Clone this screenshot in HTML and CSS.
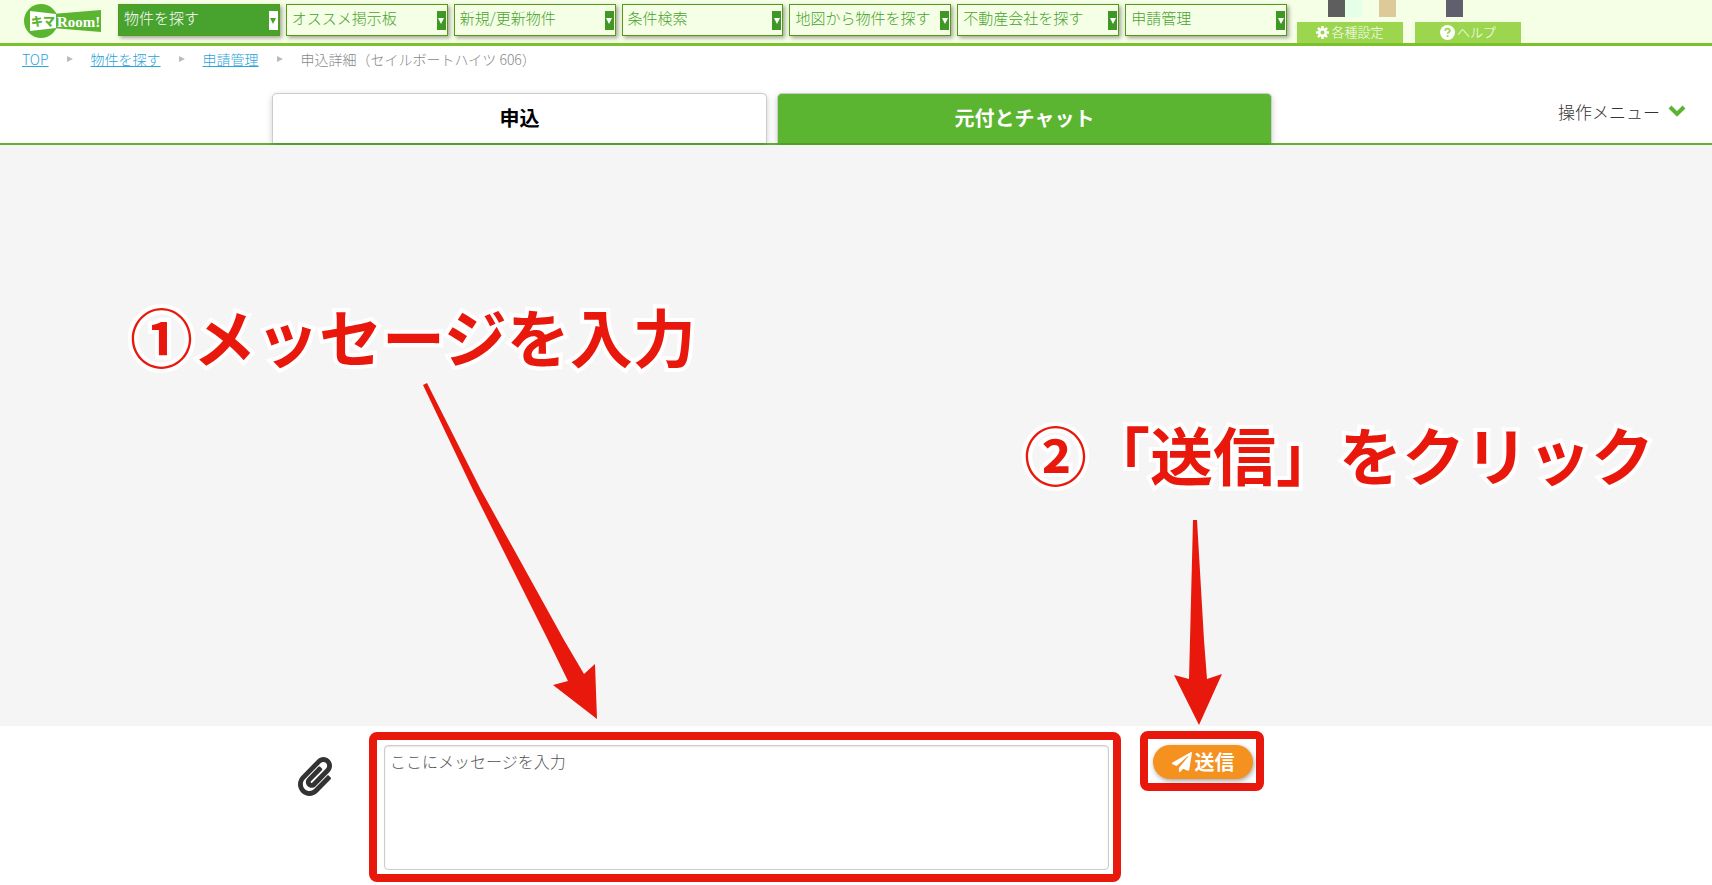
FILE: index.html
```html
<!DOCTYPE html>
<html lang="ja">
<head>
    <meta charset="UTF-8">
    <meta name="viewport" content="width=device-width, initial-scale=1.0">
    <title>申込詳細 | キマRoom!</title>
    <link rel="stylesheet" href="styles.css">
</head>
<body>
    <header class="header">
        <a href="#" class="logo" aria-label="キマRoom!">
            <svg width="78" height="36" viewBox="24 3 78 36">
                <circle cx="41" cy="21" r="17" fill="#5cb531"/>
                <path d="M52 14 L101 10 V32 L52 28 Z" fill="#5cb531"/>
                <path d="M30 11 L56 14 V28 L30 31 Z" fill="#fff"/>
                <text x="31" y="26" class="logo-kima">キマ</text>
                <text x="57" y="27" class="logo-room">Room!</text>
            </svg>
        </a>
        <nav class="nav">
            <a href="#" class="active">物件を探す<span class="arrow"></span></a>
            <a href="#">オススメ掲示板<span class="arrow"></span></a>
            <a href="#">新規/更新物件<span class="arrow"></span></a>
            <a href="#">条件検索<span class="arrow"></span></a>
            <a href="#">地図から物件を探す<span class="arrow"></span></a>
            <a href="#">不動産会社を探す<span class="arrow"></span></a>
            <a href="#">申請管理<span class="arrow"></span></a>
        </nav>
        <div class="utility">
            <div class="utility-col">
                <div class="mosaic">
                    <span class="m-gray"></span><span class="m-mint"></span><span class="m-sand"></span>
                </div>
                <a href="#" class="utility-btn">
                    <svg width="13" height="13" viewBox="0 0 16 16">
                        <circle cx="8" cy="8" r="4" fill="none" stroke="#fff" stroke-width="3"/>
                        <path d="M8 0v3M8 13v3M0 8h3M13 8h3M2.4 2.4l2 2M11.6 11.6l2 2M2.4 13.6l2-2M11.6 4.4l2-2" stroke="#fff" stroke-width="3"/>
                    </svg>
                    各種設定
                </a>
            </div>
            <div class="utility-col">
                <div class="mosaic">
                    <span class="m-navy"></span>
                </div>
                <a href="#" class="utility-btn">
                    <svg width="15" height="15" viewBox="0 0 16 16">
                        <circle cx="8" cy="8" r="8" fill="#fff"/>
                        <path d="M5.6 6.2c0-3.2 4.9-3 4.9-.2 0 1.6-2.4 1.7-2.4 3.4M8.1 10.8v2" fill="none" stroke="#9bd64e" stroke-width="2"/>
                    </svg>
                    ヘルプ
                </a>
            </div>
        </div>
    </header>

    <nav class="breadcrumb">
        <a href="#">TOP</a>
        <span class="sep"></span>
        <a href="#">物件を探す</a>
        <span class="sep"></span>
        <a href="#">申請管理</a>
        <span class="sep"></span>
        <span>申込詳細（セイルボートハイツ 606）</span>
    </nav>

    <div class="tab-bar">
        <div class="tabs">
            <button type="button" class="tab">申込</button>
            <button type="button" class="tab selected">元付とチャット</button>
        </div>
        <div class="tab-side">
            <button type="button" class="menu-btn">
                操作メニュー
                <svg width="18" height="12" viewBox="0 0 18 12">
                    <path d="M2 2 L9 9 L16 2" fill="none" stroke="#5cb531" stroke-width="4"/>
                </svg>
            </button>
        </div>
    </div>

    <main class="chat">
        <p class="note note-1">①メッセージを入力</p>
        <p class="note note-2">②「送信」をクリック</p>
        <svg class="pointer pointer-1" width="180" height="340" viewBox="420 380 180 340">
            <path d="M423 385 L427 383 L481 490 L564 640 L584 674 L595 664 L597 719 L553 685 L568 681 L548 640 L473 490 Z"/>
        </svg>
        <svg class="pointer pointer-2" width="50" height="206" viewBox="1173 520 50 206">
            <path d="M1193 520 H1197 L1204 640 L1207 679 L1222 674 L1199 725 L1174 675 L1189 679 L1190 640 Z"/>
        </svg>
    </main>

    <form class="composer">
        <button type="button" class="attach" aria-label="ファイルを添付">
            <svg width="34" height="39" viewBox="0 0 448 512">
                <path fill="#333" d="M43.246 466.142c-58.43-60.289-57.341-157.511 1.386-217.581L254.392 34c44.316-45.332 116.351-45.336 160.671 0 43.89 44.894 43.943 117.329 0 162.276L232.214 383.128c-29.855 30.537-78.633 30.111-107.982-.998-28.275-29.97-27.368-77.473 1.452-106.953l143.743-146.835c6.182-6.314 16.312-6.422 22.626-.241l22.861 22.379c6.315 6.182 6.422 16.312.241 22.626L171.427 319.927c-4.932 5.045-5.236 13.428-.648 18.292 4.372 4.634 11.245 4.711 15.688.165l182.849-186.851c19.613-20.062 19.613-52.725-.011-72.798-19.189-19.627-49.957-19.637-69.154 0L90.39 293.295c-34.763 35.56-35.299 93.12-1.191 128.313 34.01 35.093 88.985 35.137 123.058.286l172.06-175.999c6.177-6.319 16.307-6.433 22.626-.256l22.877 22.364c6.319 6.177 6.434 16.307.256 22.626l-172.06 175.998c-59.576 60.938-155.943 60.216-214.77-.485z"/>
            </svg>
        </button>
        <div class="frame frame-message">
            <textarea class="message" placeholder="ここにメッセージを入力" aria-label="メッセージ"></textarea>
        </div>
        <div class="frame frame-send">
            <button type="submit" class="send">
                <svg width="20" height="20" viewBox="0 0 512 512">
                    <path fill="#fff" d="M476 3.2L12.5 270.6c-18.1 10.4-15.8 35.6 2.2 43.2L121 358.4l287.3-253.2c5.5-4.9 13.3 2.6 8.6 8.3L176 407v80.5c0 23.6 28.5 32.9 42.5 15.8L282 426l124.6 52.2c14.2 6 30.4-2.9 33-18.2l72-432C515 7.8 493.3-6.8 476 3.2z"/>
                </svg>
                送信
            </button>
        </div>
    </form>
</body>
</html>
```
FILE: styles.css
```css
* {
    box-sizing: border-box;
}
body {
    font-family: "Noto Sans CJK JP", "Noto Sans", sans-serif;
    font-weight: 300;
    color: #333;
    background-color: #fff;
    margin: 0;
    min-height: 100vh;
    display: flex;
    flex-direction: column;
}
button, textarea {
    font-family: inherit;
    font-weight: inherit;
}

/* ヘッダー */
.header {
    height: 46px;
    background-color: #f5ffe6;
    border-bottom: 3px solid #7bc12c;
    display: flex;
    align-items: flex-start;
    padding-left: 24px;
}
.logo {
    margin: 3px 16px 0 0;
}
.logo svg {
    display: block;
}
.logo-kima {
    font-size: 12px;
    font-weight: 900;
    fill: #5cb531;
}
.logo-room {
    font-family: "Liberation Serif", serif;
    font-size: 15px;
    font-weight: bold;
    fill: #fff;
}
.nav {
    flex: 1;
    display: flex;
    gap: 6px;
    margin-top: 4px;
}
.nav a {
    flex: 1;
    height: 32px;
    padding: 0 1px 4px 5px;
    border: 1px solid #5a951c;
    background-color: #f5ffe6;
    box-shadow: 2px 2px 4px rgba(0, 0, 0, 0.35);
    color: #48a22e;
    font-size: 15px;
    line-height: 26px;
    text-decoration: none;
    white-space: nowrap;
    display: flex;
    justify-content: space-between;
}
.nav .arrow {
    width: 9px;
    height: 19px;
    margin-top: 6px;
    background-color: #3f9726;
    display: flex;
    align-items: center;
    justify-content: center;
}
.nav .arrow::after {
    content: "";
    border: 3px solid transparent;
    border-top: 6px solid #fff;
    border-bottom: 0;
}
.nav a.active {
    background-color: #48a22e;
    color: #fff;
}
.nav .active .arrow {
    background-color: #fff;
}
.nav .active .arrow::after {
    border-top-color: #48a22e;
}
.utility {
    width: 425px;
    display: flex;
    gap: 12px;
    padding-left: 10px;
}
.utility-col {
    width: 106px;
}
.mosaic {
    display: flex;
    height: 22px;
    padding-left: 31px;
}
.mosaic span {
    width: 17px;
    height: 17px;
}
.m-gray {
    background-color: #5e5e5e;
}
.m-mint {
    background-color: #e5ffe9;
}
.mosaic .m-sand {
    background-color: #dec999;
    margin-left: 17px;
}
.m-navy {
    background-color: #5f5f6e;
}
.utility-btn {
    height: 21px;
    padding-bottom: 1px;
    background-color: #9bd64e;
    color: #fff;
    font-size: 13px;
    line-height: 20px;
    text-decoration: none;
    display: flex;
    align-items: center;
    justify-content: center;
    gap: 2px;
}

/* パンくず */
.breadcrumb {
    display: flex;
    align-items: center;
    gap: 18px;
    padding: 3px 22px 0;
    font-size: 14px;
    line-height: 20px;
    color: #888;
}
.breadcrumb a {
    color: #2ba3dc;
}
.breadcrumb .sep {
    border: 3px solid transparent;
    border-left: 6px solid #bbb;
    border-right: 0;
}

/* タブ */
.tab-bar {
    display: flex;
    margin-top: 24px;
    padding-left: 272px;
    border-bottom: 2px solid #5cb531;
}
.tabs {
    flex: 1;
    display: flex;
    gap: 10px;
}
.tab {
    flex: 1;
    height: 50px;
    padding: 0 0 2px;
    border: 1px solid #ccc;
    border-bottom: 0;
    border-radius: 5px 5px 0 0;
    background-color: #fff;
    box-shadow: 0 2px 6px rgba(0, 0, 0, 0.2);
    color: #000;
    font-size: 20px;
    font-weight: bold;
    cursor: pointer;
}
.tab.selected {
    background-color: #5cb531;
    color: #fff;
}
.tab-side {
    width: 440px;
    display: flex;
    align-items: center;
    justify-content: flex-end;
    padding: 0 26px 14px 0;
}
.menu-btn {
    display: flex;
    align-items: center;
    gap: 8px;
    padding: 0;
    border: 0;
    background: none;
    color: #333;
    font-size: 17px;
    cursor: pointer;
}

/* チャット */
.chat {
    position: relative;
    flex: 1;
    min-height: 581px;
    background-color: #f5f5f5;
}
.note {
    position: absolute;
    margin: 0;
    color: #e8190c;
    font-size: 63px;
    font-weight: bold;
    line-height: 80px;
    white-space: nowrap;
    paint-order: stroke fill;
    -webkit-text-stroke: 8px #fff;
}
.note-1 {
    left: 130px;
    top: 150px;
}
.note-2 {
    right: 58px;
    top: 268px;
}
.pointer {
    position: absolute;
    fill: #e8190c;
}
.pointer-1 {
    left: 420px;
    top: 235px;
}
.pointer-2 {
    right: 489px;
    top: 375px;
}

/* 入力欄 */
.composer {
    display: flex;
    align-items: flex-start;
    padding: 5px 448px 3px 298px;
}
.attach {
    margin: 26px 37px 0 0;
    padding: 0;
    border: 0;
    background: none;
    cursor: pointer;
}
.attach svg {
    display: block;
}
.frame {
    border: 8px solid #e8190c;
    border-radius: 8px;
}
.frame-message {
    flex: 1;
    margin: 1px 19px 0 0;
    padding: 5px 4px 4px 7px;
}
.message {
    display: block;
    width: 100%;
    height: 125px;
    padding: 3px 5px;
    border: 1px solid #ccc;
    border-radius: 4px;
    box-shadow: inset 0 1px 2px rgba(0, 0, 0, 0.1);
    font-size: 16px;
    line-height: 24px;
    resize: none;
}
.message::placeholder {
    color: #555;
}
.frame-send {
    padding: 6px 3px 4px 5px;
}
.send {
    width: 100px;
    height: 34px;
    padding: 0;
    border: 0;
    border-radius: 17px;
    background-color: #f5911e;
    box-shadow: 1px 2px 5px rgba(0, 0, 0, 0.35);
    color: #fff;
    font-size: 20px;
    font-weight: bold;
    line-height: 30px;
    display: flex;
    align-items: center;
    justify-content: center;
    gap: 3px;
    cursor: pointer;
}
```
